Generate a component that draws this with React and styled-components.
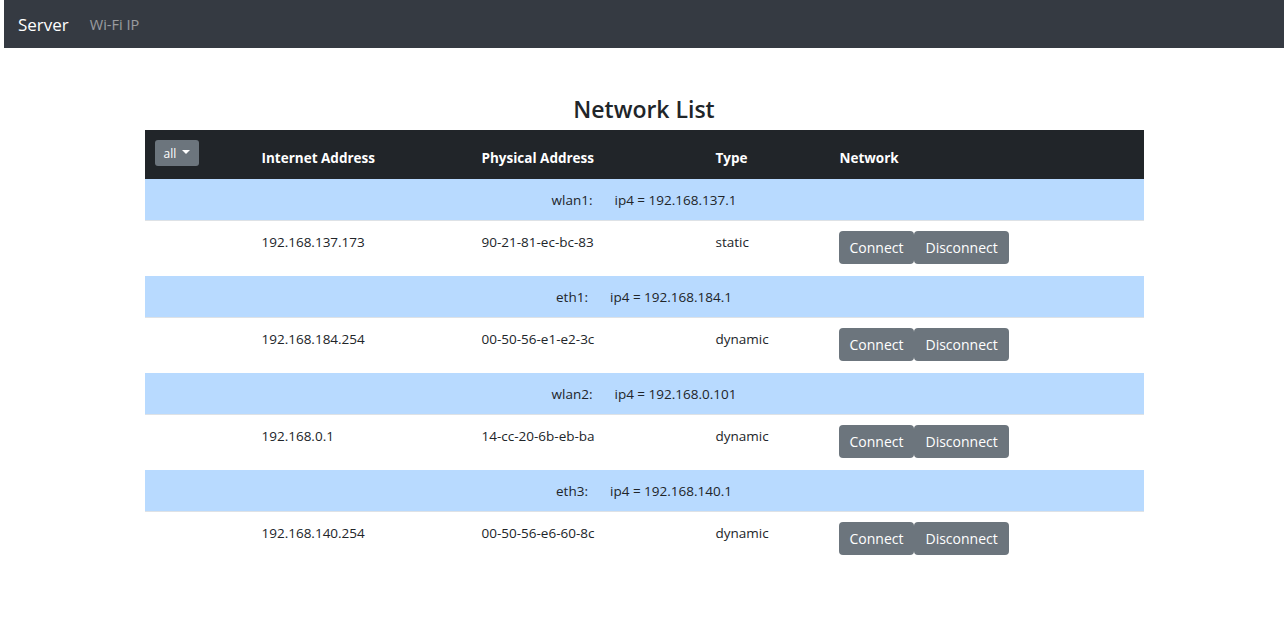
import React from 'react'
import styled, { createGlobalStyle } from 'styled-components'

const GlobalStyle = createGlobalStyle`
   body {
      margin: 0;
      padding-left: 4px;
      font-family: "Open Sans", "Noto Sans", sans-serif;
      font-size: 13.5px;
      color: #212529;
      background: #fff;
   }
`

const networks = [
   { name: 'wlan1', ip4: '192.168.137.1', address: '192.168.137.173', mac: '90-21-81-ec-bc-83', type: 'static' },
   { name: 'eth1', ip4: '192.168.184.1', address: '192.168.184.254', mac: '00-50-56-e1-e2-3c', type: 'dynamic' },
   { name: 'wlan2', ip4: '192.168.0.101', address: '192.168.0.1', mac: '14-cc-20-6b-eb-ba', type: 'dynamic' },
   { name: 'eth3', ip4: '192.168.140.1', address: '192.168.140.254', mac: '00-50-56-e6-60-8c', type: 'dynamic' }
]

const App = () => (
   <React.Fragment>
      <GlobalStyle />
      <Navbar>
         <Brand>Server</Brand>
         <NavLink>Wi-Fi IP</NavLink>
      </Navbar>
      <Main>
         <Title>Network List</Title>
         <Table>
            <colgroup>
               <col style={{ width: 105 }} />
               <col style={{ width: 220 }} />
               <col style={{ width: 234 }} />
               <col style={{ width: 124 }} />
               <col />
            </colgroup>
            <thead>
               <HeadRow>
                  <HeadCell>
                     <FilterButton>
                        all <Caret />
                     </FilterButton>
                  </HeadCell>
                  <HeadCell>Internet Address</HeadCell>
                  <HeadCell>Physical Address</HeadCell>
                  <HeadCell>Type</HeadCell>
                  <HeadCell>Network</HeadCell>
               </HeadRow>
            </thead>
            <tbody>
               {networks.map(net => (
                  <React.Fragment key={net.name}>
                     <GroupRow>
                        <GroupCell colSpan={5}>
                           <IfaceName>{net.name}:</IfaceName>
                           ip4 = {net.ip4}
                        </GroupCell>
                     </GroupRow>
                     <tr>
                        <Cell />
                        <Cell>{net.address}</Cell>
                        <Cell>{net.mac}</Cell>
                        <Cell>{net.type}</Cell>
                        <Cell actions>
                           <ButtonGroup>
                              <Button>Connect</Button>
                              <Button>Disconnect</Button>
                           </ButtonGroup>
                        </Cell>
                     </tr>
                  </React.Fragment>
               ))}
            </tbody>
         </Table>
      </Main>
   </React.Fragment>
)

export default App

const Navbar = styled.nav`
   display: flex;
   align-items: center;
   height: 48px;
   padding: 0 14px;
   background-color: #353a42;
`

const Brand = styled.span`
   color: #fff;
   font-size: 17px;
   margin-right: 21px;
`

const NavLink = styled.span`
   color: rgba(255, 255, 255, 0.5);
   font-size: 14.5px;
`

const Main = styled.main`
   width: 999px;
   margin: 0 auto;
   padding-top: 44px;
`

const Title = styled.h1`
   margin: 0 0 4px;
   text-align: center;
   font-size: 23px;
   font-weight: 600;
   line-height: 34px;
`

const Table = styled.table`
   width: 100%;
   border-collapse: collapse;
   table-layout: fixed;
`

const HeadRow = styled.tr`
   height: 49px;
   background-color: #212529;
`

const HeadCell = styled.th`
   color: #fff;
   text-align: left;
   font-weight: 700;
   padding: 7px 12px 0;
   vertical-align: middle;
   &:first-child {
      padding: 0 10px;
   }
`

const FilterButton = styled.button`
   display: inline-flex;
   align-items: center;
   gap: 6px;
   height: 26px;
   padding: 0 9px;
   border: none;
   border-radius: 3px;
   background-color: #6c757d;
   color: #fff;
   font-family: inherit;
   font-size: 12px;
   margin-top: -3px;
`

const Caret = styled.span`
   display: inline-block;
   border-top: 4px solid #fff;
   border-left: 4px solid transparent;
   border-right: 4px solid transparent;
   margin-top: -2px;
`

const GroupRow = styled.tr`
   background-color: #b8daff;
`

const GroupCell = styled.td`
   text-align: center;
   height: 41px;
   padding: 0 12px;
   border-bottom: 1px solid #dee2e6;
`

const IfaceName = styled.span`
   margin-right: 22px;
`

const Cell = styled.td`
   padding: 10px 12px 12px ${({ actions }) => (actions ? '11px' : '12px')};
   height: 33px;
   vertical-align: top;
   line-height: 22px;
`

const ButtonGroup = styled.div`
   display: flex;
`

const Button = styled.button`
   height: 33px;
   padding: 0 11px;
   border: none;
   border-radius: 4px;
   background-color: #6c757d;
   color: #fff;
   font-family: inherit;
   font-size: 14px;
`
